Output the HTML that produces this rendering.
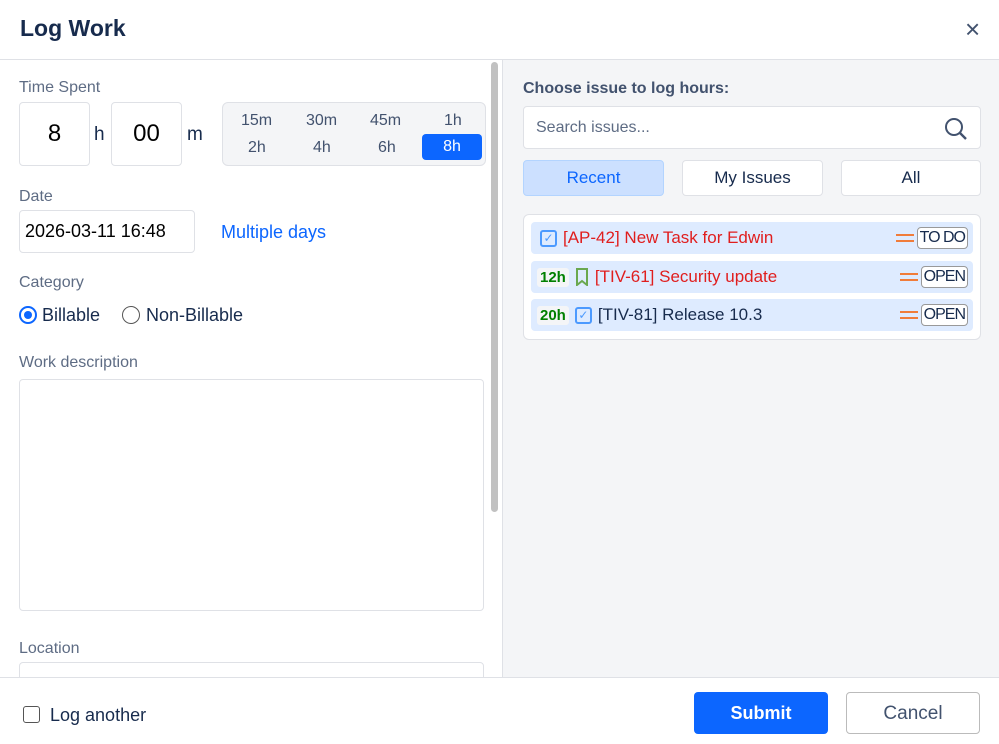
<!DOCTYPE html><html><head><style>
*{box-sizing:border-box;margin:0;padding:0}
body{width:999px;height:744px;background:#fff;font-family:"Liberation Sans",sans-serif;position:relative;overflow:hidden;color:#172b4d}
.a{position:absolute}
.lbl{color:#5e6c84;font-size:16px}
.box{border:1px solid #dfe1e6;border-radius:4px;background:#fff}
.row{position:absolute;left:531px;width:442px;height:32px;background:#deebff;border-radius:4px;font-size:17px;display:flex;align-items:center}
.hr{background:#f4f5f7;color:#008000;font-weight:bold;font-size:15px;padding:1px 3px;margin-left:6px;border-radius:3px}
.chk{width:17px;height:17px;border:2px solid #4c9aff;border-radius:3px;margin:0 6px;color:#4c9aff;font-size:12px;line-height:13px;text-align:center}
.st{position:absolute;right:5px;border:1px solid #999;border-radius:4px;background:#fff;font-size:16px;padding:1px 2px;color:#172b4d;letter-spacing:-1px}
.eq{position:absolute;width:18px;height:8px;border-top:2px solid #f07c3a;border-bottom:2px solid #f07c3a}
</style></head><body>
<div class="a" style="left:20px;top:15px;font-size:23px;font-weight:bold;color:#172b4d">Log Work</div>
<div class="a" style="left:965px;top:14px;font-size:26px;color:#42526e">×</div>
<div class="a" style="left:0;top:59px;width:999px;height:1px;background:#dfe1e6"></div>
<div class="a" style="left:502px;top:60px;width:497px;height:617px;background:#f4f5f7;border-left:1px solid #dfe1e6"></div>
<div class="a" style="left:491px;top:62px;width:7px;height:450px;background:#c1c1c1;border-radius:4px"></div>
<div class="a lbl" style="left:19px;top:79px">Time Spent</div>
<div class="a box" style="left:19px;top:102px;width:71px;height:64px;font-size:24px;text-align:center;line-height:62px;color:#000">8</div>
<div class="a" style="left:94px;top:124px;font-size:19px">h</div>
<div class="a box" style="left:111px;top:102px;width:71px;height:64px;font-size:24px;text-align:center;line-height:62px;color:#000">00</div>
<div class="a" style="left:187px;top:124px;font-size:19px">m</div>
<div class="a" style="left:222px;top:102px;width:264px;height:64px;background:#f4f5f7;border:1px solid #dfe1e6;border-radius:6px;font-size:16px;color:#42526e">
<span class="a" style="left:18px;top:9px">15m</span><span class="a" style="left:83px;top:9px">30m</span><span class="a" style="left:147px;top:9px">45m</span><span class="a" style="left:221px;top:9px">1h</span>
<span class="a" style="left:25px;top:36px">2h</span><span class="a" style="left:90px;top:36px">4h</span><span class="a" style="left:155px;top:36px">6h</span>
<span class="a" style="left:199px;top:31px;width:60px;height:26px;background:#0c66ff;color:#fff;border-radius:4px;text-align:center;line-height:26px">8h</span></div>
<div class="a lbl" style="left:19px;top:188px">Date</div>
<div class="a box" style="left:19px;top:210px;width:176px;height:43px;font-size:18px;line-height:41px;padding-left:5px;color:#000">2026-03-11 16:48</div>
<div class="a" style="left:221px;top:222px;font-size:18px;color:#0c66ff">Multiple days</div>
<div class="a lbl" style="left:19px;top:274px">Category</div>
<div class="a" style="left:19px;top:306px;width:18px;height:18px;border:2px solid #0c66ff;border-radius:50%"><div style="margin:3px;width:8px;height:8px;background:#0c66ff;border-radius:50%"></div></div>
<div class="a" style="left:42px;top:305px;font-size:18px">Billable</div>
<div class="a" style="left:122px;top:306px;width:18px;height:18px;border:1px solid #555;border-radius:50%"></div>
<div class="a" style="left:146px;top:305px;font-size:18px">Non-Billable</div>
<div class="a lbl" style="left:19px;top:354px">Work description</div>
<div class="a box" style="left:19px;top:379px;width:465px;height:232px"></div>
<div class="a lbl" style="left:19px;top:640px">Location</div>
<div class="a box" style="left:19px;top:662px;width:465px;height:20px"></div>
<div class="a" style="left:0;top:677px;width:999px;height:67px;background:#fff;border-top:1px solid #dfe1e6"></div>
<div class="a" style="left:23px;top:706px;width:17px;height:17px;border:1px solid #555;border-radius:3px"></div>
<div class="a" style="left:50px;top:705px;font-size:18px">Log another</div>
<div class="a" style="left:694px;top:692px;width:134px;height:42px;background:#0c66ff;border-radius:4px;color:#fff;font-size:18px;font-weight:bold;text-align:center;line-height:42px">Submit</div>
<div class="a" style="left:846px;top:692px;width:134px;height:42px;border:1px solid #bbb;border-radius:4px;font-size:19px;text-align:center;line-height:42px;color:#42526e">Cancel</div>
<div class="a" style="left:523px;top:80px;font-size:16px;font-weight:bold;color:#42526e">Choose issue to log hours:</div>
<div class="a box" style="left:523px;top:106px;width:458px;height:43px;font-size:16px;line-height:41px;padding-left:12px;color:#5e6c84">Search issues...
<svg class="a" style="right:12px;top:10px" width="24" height="24" viewBox="0 0 24 24"><circle cx="10" cy="10" r="8" fill="none" stroke="#42526e" stroke-width="2"/><path d="M16 16l6 6" stroke="#42526e" stroke-width="2.4"/></svg></div>
<div class="a" style="left:523px;top:160px;width:141px;height:36px;background:#cce0ff;border:1px solid #b3d4ff;border-radius:4px;color:#0c66ff;font-size:17px;text-align:center;line-height:34px">Recent</div>
<div class="a box" style="left:682px;top:160px;width:141px;height:36px;font-size:17px;text-align:center;line-height:34px">My Issues</div>
<div class="a box" style="left:841px;top:160px;width:140px;height:36px;font-size:17px;text-align:center;line-height:34px">All</div>
<div class="a box" style="left:523px;top:214px;width:458px;height:126px;border-radius:6px"></div>
<div class="row" style="top:222px"><div class="chk" style="margin-left:9px">✓</div><span style="color:#e01e1e">[AP-42] New Task for Edwin</span><div class="eq" style="right:59px"></div><span class="st">TO DO</span></div>
<div class="row" style="top:261px"><span class="hr">12h</span><svg style="margin:0 6px" width="14" height="18" viewBox="0 0 14 18"><path d="M2 1h10v16l-5-4-5 4z" fill="none" stroke="#6aa84f" stroke-width="2"/></svg><span style="color:#e01e1e">[TIV-61] Security update</span><div class="eq" style="right:55px"></div><span class="st">OPEN</span></div>
<div class="row" style="top:299px"><span class="hr">20h</span><div class="chk">✓</div><span>[TIV-81] Release 10.3</span><div class="eq" style="right:55px"></div><span class="st">OPEN</span></div>
</body></html>
